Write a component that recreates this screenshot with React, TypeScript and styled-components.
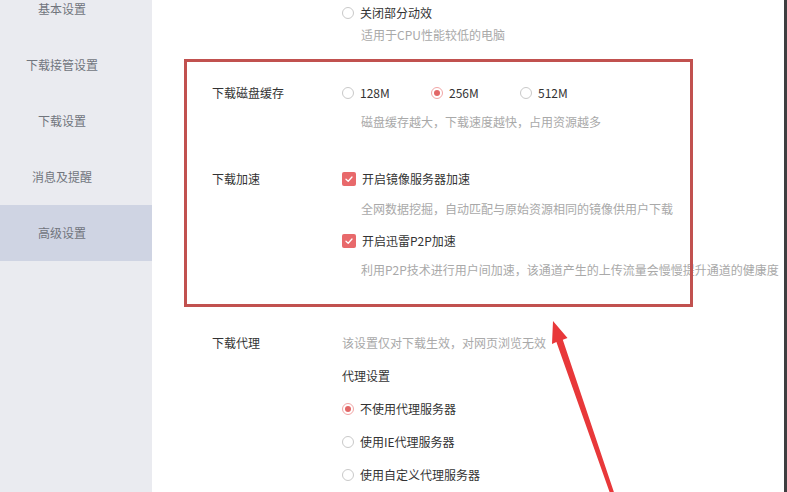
import React from 'react';
import styled, { createGlobalStyle } from 'styled-components';

const GlobalStyle = createGlobalStyle`
  html, body {
    margin: 0;
    padding: 0;
    background: #ffffff;
    overflow: hidden;
  }
  body {
    font-family: "Noto Sans CJK SC", "Microsoft YaHei", sans-serif;
    font-size: 12px;
    color: #333333;
  }
`

const Window = styled('div')`
    position: relative;
    display: flex;
    width: 787px;
    height: 492px;
    overflow: hidden;
    background: #ffffff;
`

const Sidebar = styled('nav')`
    width: 152px;
    flex-shrink: 0;
    background: #eaebf0;
    overflow: hidden;
`

const NavList = styled('ul')`
    list-style: none;
    margin: -19px 0 0 0;
    padding: 0;
`

const NavItem = styled('li')<{ $active?: boolean }>`
    height: 56px;
    line-height: 56px;
    padding-right: 28px;
    text-align: center;
    font-size: 12px;
    color: #71757d;
    background: ${p => (p.$active ? '#cfd4e3' : 'transparent')};
`

const Main = styled('main')`
    flex: 1;
    padding: 3px 0 0 60px;
    overflow: hidden;
`

const EdgeBar = styled('div')`
    width: 3px;
    flex-shrink: 0;
    background: #3e3e40;
`

const Section = styled('section')<{ $top?: number }>`
    display: flex;
    margin-top: ${p => p.$top ?? 0}px;
`

const Label = styled('div')`
    width: 130px;
    flex-shrink: 0;
    line-height: 20px;
    color: #333333;
    white-space: nowrap;
`

const Controls = styled('div')`
    display: flex;
    flex-direction: column;
    min-width: 0;
`

const OptionRow = styled('div')<{ $top?: number }>`
    display: flex;
    margin-top: ${p => p.$top ?? 0}px;
`

const Option = styled('label')<{ $width?: number }>`
    display: flex;
    align-items: center;
    gap: 6px;
    height: 20px;
    line-height: 20px;
    width: ${p => (p.$width ? `${p.$width}px` : 'auto')};
    color: #333333;
    white-space: nowrap;
`

const RadioDot = styled('span')<{ $checked?: boolean }>`
    box-sizing: border-box;
    width: 12px;
    height: 12px;
    border-radius: 50%;
    border: 1px solid ${p => (p.$checked ? '#f1a5a5' : '#c9c9c9')};
    background: #ffffff;
    display: flex;
    align-items: center;
    justify-content: center;
    flex-shrink: 0;
    &::after {
        content: '';
        display: ${p => (p.$checked ? 'block' : 'none')};
        width: 6px;
        height: 6px;
        border-radius: 50%;
        background: #e26767;
    }
`

const CheckBox = styled('span')`
    width: 14px;
    height: 14px;
    border-radius: 2px;
    background: #e8696b;
    display: flex;
    align-items: center;
    justify-content: center;
    flex-shrink: 0;
`

const Desc = styled('div')<{ $top?: number; $indent?: number }>`
    margin-top: ${p => p.$top ?? 0}px;
    padding-left: ${p => p.$indent ?? 0}px;
    line-height: 20px;
    color: #a9a9a9;
    white-space: nowrap;
`

const SubTitle = styled('div')<{ $top?: number }>`
    margin-top: ${p => p.$top ?? 0}px;
    line-height: 20px;
    color: #333333;
`

const Highlight = styled('div')`
    position: absolute;
    left: 184px;
    top: 59px;
    width: 503px;
    height: 242px;
    border: 3px solid #c1514f;
    pointer-events: none;
`

const ArrowLayer = styled('svg')`
    position: absolute;
    left: 0;
    top: 0;
    pointer-events: none;
`

function Radio({ checked, children, width }: { checked?: boolean; children: React.ReactNode; width?: number }) {
    return (
        <Option $width={width}>
            <RadioDot $checked={checked} />
            {children}
        </Option>
    )
}

function Check({ children }: { children: React.ReactNode }) {
    return (
        <Option>
            <CheckBox>
                <svg width="10" height="10" viewBox="0 0 10 10">
                    <path d="M2 5.2 L4.2 7.2 L8 3" fill="none" stroke="#ffffff" strokeWidth="1.3" strokeLinecap="round" strokeLinejoin="round" />
                </svg>
            </CheckBox>
            {children}
        </Option>
    )
}

const navItems = ['基本设置', '下载接管设置', '下载设置', '消息及提醒', '高级设置']

function App() {
    return (
        <>
            <GlobalStyle />
            <Window>
                <Sidebar>
                    <NavList>
                        {navItems.map(item => (
                            <NavItem key={item} $active={item === '高级设置'}>{item}</NavItem>
                        ))}
                    </NavList>
                </Sidebar>
                <Main>
                    <Section>
                        <Label />
                        <Controls>
                            <Radio>关闭部分动效</Radio>
                            <Desc $top={2} $indent={19}>适用于CPU性能较低的电脑</Desc>
                        </Controls>
                    </Section>
                    <Section $top={38}>
                        <Label>下载磁盘缓存</Label>
                        <Controls>
                            <OptionRow>
                                <Radio width={89}>128M</Radio>
                                <Radio width={89} checked>256M</Radio>
                                <Radio width={89}>512M</Radio>
                            </OptionRow>
                            <Desc $top={9} $indent={19}>磁盘缓存越大，下载速度越快，占用资源越多</Desc>
                        </Controls>
                    </Section>
                    <Section $top={37}>
                        <Label>下载加速</Label>
                        <Controls>
                            <Check>开启镜像服务器加速</Check>
                            <Desc $top={10} $indent={19}>全网数据挖掘，自动匹配与原始资源相同的镜像供用户下载</Desc>
                            <OptionRow $top={12}>
                                <Check>开启迅雷P2P加速</Check>
                            </OptionRow>
                            <Desc $top={9} $indent={19}>利用P2P技术进行用户间加速，该通道产生的上传流量会慢慢提升通道的健康度</Desc>
                        </Controls>
                    </Section>
                    <Section $top={53}>
                        <Label>下载代理</Label>
                        <Controls>
                            <Desc>该设置仅对下载生效，对网页浏览无效</Desc>
                            <SubTitle $top={13}>代理设置</SubTitle>
                            <OptionRow $top={13}>
                                <Radio checked>不使用代理服务器</Radio>
                            </OptionRow>
                            <OptionRow $top={13}>
                                <Radio>使用IE代理服务器</Radio>
                            </OptionRow>
                            <OptionRow $top={13}>
                                <Radio>使用自定义代理服务器</Radio>
                            </OptionRow>
                        </Controls>
                    </Section>
                </Main>
                <EdgeBar />
                <Highlight />
                <ArrowLayer width="787" height="492" viewBox="0 0 787 492">
                    <polygon
                        points="553,321 567.5,338 562.8,339.8 616.4,499.5 612.6,500.6 556.4,342 552,344"
                        fill="#e8383a"
                    />
                </ArrowLayer>
            </Window>
        </>
    );
}
export default App;
